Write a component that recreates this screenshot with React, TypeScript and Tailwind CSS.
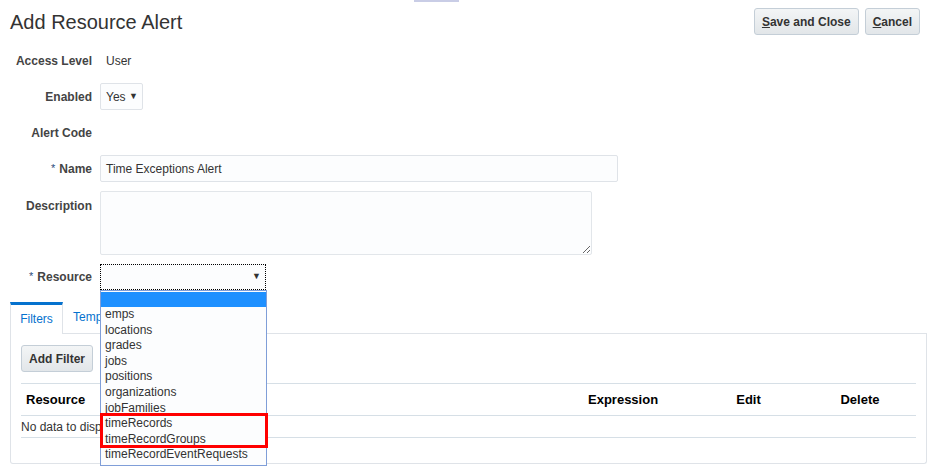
import { ReactNode } from 'react'

const font = { fontFamily: '"Liberation Sans", Arial, sans-serif' }

const resources = [
  'emps',
  'locations',
  'grades',
  'jobs',
  'positions',
  'organizations',
  'jobFamilies',
  'timeRecords',
  'timeRecordGroups',
  'timeRecordEventRequests'
]

function Label({ children, required }: { children: ReactNode; required?: boolean }) {
  return (
    <div className="w-[92px] shrink-0 text-right text-[12px] font-bold text-[#444]">
      {required && <span className="mr-[4px] align-top text-[11px] font-normal text-[#2c4a7a]">*</span>}
      {children}
    </div>
  )
}

function ToolbarButton({ hot, rest }: { hot: string; rest: string }) {
  return (
    <button className="h-[27px] rounded-[3px] border border-[#c4ced7] bg-gradient-to-b from-[#f3f5f6] to-[#e2e6e9] px-[7px] text-[12px] font-bold text-[#333]">
      <span className="underline">{hot}</span>
      {rest}
    </button>
  )
}

export default function App() {
  return (
    <div style={font} className="relative h-[474px] w-[931px] overflow-hidden bg-white text-[#333]">
      {/* stray bar at the very top */}
      <div className="absolute left-[414px] top-0 h-[2px] w-[45px] bg-[#c9cde6]" />

      {/* Header */}
      <div className="flex items-start justify-between pl-[10px] pr-[11px] pt-[8px]">
        <h1 className="mt-[2px] text-[20px] leading-[24px] text-[#333]">Add Resource Alert</h1>
        <div className="flex gap-[6px]">
          <ToolbarButton hot="S" rest="ave and Close" />
          <ToolbarButton hot="C" rest="ancel" />
        </div>
      </div>

      {/* Form */}
      <div className="mt-[14px] flex flex-col">
        <div className="flex h-[24px] items-center gap-[8px]">
          <Label>Access Level</Label>
          <span className="pl-[6px] text-[12px] text-[#333]">User</span>
        </div>

        <div className="mt-[10px] flex items-center gap-[8px]">
          <Label>Enabled</Label>
          <div className="flex h-[27px] w-[43px] items-center justify-between rounded-[2px] border border-[#dfe3e8] bg-[#fcfdfe] pl-[5px] pr-[4px] text-[12px]">
            <span>Yes</span>
            <span className="text-[9px]">▼</span>
          </div>
        </div>

        <div className="mt-[11px] flex h-[24px] items-center gap-[8px]">
          <Label>Alert Code</Label>
        </div>

        <div className="mt-[10px] flex items-center gap-[8px]">
          <Label required>Name</Label>
          <div className="flex h-[27px] w-[518px] items-center rounded-[2px] border border-[#dfe3e8] bg-[#fcfdfe] px-[5px] text-[12px]">
            Time Exceptions Alert
          </div>
        </div>

        <div className="mt-[9px] flex items-start gap-[8px]">
          <div className="pt-[6px]">
            <Label>Description</Label>
          </div>
          <textarea className="h-[64px] w-[492px] rounded-[2px] border border-[#e2e6ea] bg-[#fcfdfe] outline-none" />
        </div>

        <div className="mt-[9px] flex items-center gap-[8px]">
          <Label required>Resource</Label>
          <div className="flex h-[26px] w-[166px] items-center justify-end border border-dotted border-black bg-[#fcfdfe] pr-[4px]">
            <span className="text-[9px]">▼</span>
          </div>
        </div>
      </div>

      {/* Tabs */}
      <div className="mx-[10px] mt-[12px] flex h-[32px] w-[917px]">
        <div className="flex w-[53px] items-center justify-center border-x border-t-[3px] border-x-[#dfe3e8] border-t-[#0572ce] pb-[2px] bg-white text-[12px] text-[#0572ce]">
          Filters
        </div>
        <div className="flex flex-1 items-center border-b border-[#dfe3e8] pb-[2px] pl-[10px] text-[12px] text-[#0572ce]">
          Templates
        </div>
      </div>
      <div className="mx-[10px] h-[130px] w-[917px] rounded-b-[3px] border-x border-b border-[#dfe3e8] px-[10px] pt-[11px]">
        <button className="h-[27px] w-[72px] rounded-[3px] border border-[#c4ced7] bg-gradient-to-b from-[#f3f5f6] to-[#e2e6e9] text-[12px] font-bold text-[#333]">
          Add Filter
        </button>
        <div className="mt-[11px] w-[895px] border-t border-[#d6dfe6]">
          <div className="grid h-[32px] grid-cols-[561px_111px_111px_112px] items-center border-b border-[#d6dfe6] text-[13px] font-bold text-black">
            <div className="pl-[5px]">Resource</div>
            <div className="pl-[6px]">Expression</div>
            <div className="text-center">Edit</div>
            <div className="text-center">Delete</div>
          </div>
          <div className="flex h-[22px] items-center border-b border-[#d6dfe6] text-[12px] text-[#333]">
            No data to display.
          </div>
        </div>
      </div>

      {/* Open resource dropdown */}
      <div className="absolute left-[100px] top-[290px] w-[167px] border border-[#7f9ed8] bg-[#fcfdfe] pb-[2px] pt-[1px]">
        <div className="h-[15px] bg-[#1e90ff]" />
        {resources.map((r) => (
          <div key={r} className="h-[15.6px] pl-[4px] text-[12px] leading-[15.6px] text-[#333]">
            {r}
          </div>
        ))}
      </div>
      <div className="absolute left-[100px] top-[413px] h-[35px] w-[168px] border-[3px] border-[#f00]" />
    </div>
  )
}
